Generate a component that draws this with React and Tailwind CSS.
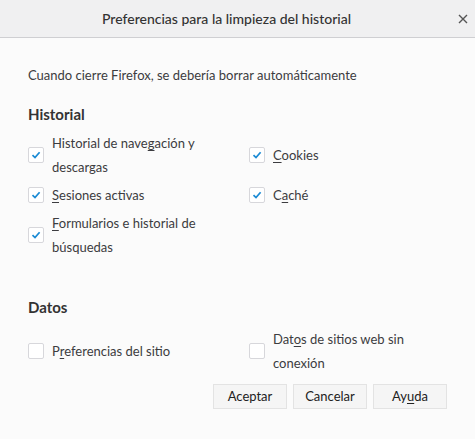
import React from 'react';

const font = { fontFamily: 'Lato, "Open Sans", sans-serif' };

const Check = ({ checked }) => (
  <span className="w-4 h-4 shrink-0 border border-[#d7d7db] bg-white rounded-[2px] flex items-center justify-center">
    {checked && (
      <svg width="10" height="10" viewBox="0 0 10 10">
        <path d="M1.5 5.2 L4 7.6 L8.6 2.2" fill="none" stroke="#1a8ad4" strokeWidth="1.7" />
      </svg>
    )}
  </span>
);

const K = ({ children }) => <span className="underline underline-offset-2 decoration-1">{children}</span>;

const Row = ({ checked, wide, children }) => (
  <label className="flex items-center gap-2">
    <Check checked={checked} />
    <span className={`leading-[24px] ${wide ? 'max-w-[150px]' : 'max-w-[180px]'}`}>{children}</span>
  </label>
);

export default function App() {
  return (
    <div className="w-[475px] h-[439px] bg-[#fbfbfb] text-[#3c3c40] text-[13px] flex flex-col" style={font}>
      <div className="h-[38px] shrink-0 bg-[#f0f0f1] border-b border-[#cfcfd2] flex items-center relative">
        <div className="flex-1 text-center pr-[22px] text-[14px] font-medium text-[#333]">Preferencias para la limpieza del historial</div>
        <svg className="absolute left-[458px] top-[14px]" width="10" height="10" viewBox="0 0 10 10">
          <path d="M1 1 L9 9 M9 1 L1 9" stroke="#555" strokeWidth="1.4" />
        </svg>
      </div>

      <div className="px-[28px] flex-1 flex flex-col">
        <p className="mt-[27px] leading-[20px]">Cuando cierre Firefox, se debería borrar automáticamente</p>

        <h2 className="mt-[19px] text-[15px] font-bold leading-[20px] text-[#333]">Historial</h2>
        <div className="mt-[7px] grid grid-cols-[221px_1fr] items-center gap-y-[4px]">
          <Row checked>Historial de nave<K>g</K>ación y descargas</Row>
          <Row checked wide><K>C</K>ookies</Row>
          <Row checked><K>S</K>esiones activas</Row>
          <Row checked wide>C<K>a</K>ché</Row>
          <Row checked><K>F</K>ormularios e historial de búsquedas</Row>
        </div>

        <h2 className="mt-[38px] text-[15px] font-bold leading-[20px] text-[#333]">Datos</h2>
        <div className="mt-[10px] grid grid-cols-[221px_1fr] items-center">
          <Row>P<K>r</K>eferencias del sitio</Row>
          <Row wide>Dat<K>o</K>s de sitios web sin conexión</Row>
        </div>

        <div className="mt-[9px] flex justify-end gap-[6px]">
          <button className="w-[74px] h-[25px] bg-[#f5f5f5] border border-[#e3e3e3] text-[#222]">Aceptar</button>
          <button className="w-[74px] h-[25px] bg-[#f5f5f5] border border-[#e3e3e3] text-[#222]">Cancelar</button>
          <button className="w-[74px] h-[25px] bg-[#f5f5f5] border border-[#e3e3e3] text-[#222]">Ay<K>u</K>da</button>
        </div>
      </div>
    </div>
  );
}
